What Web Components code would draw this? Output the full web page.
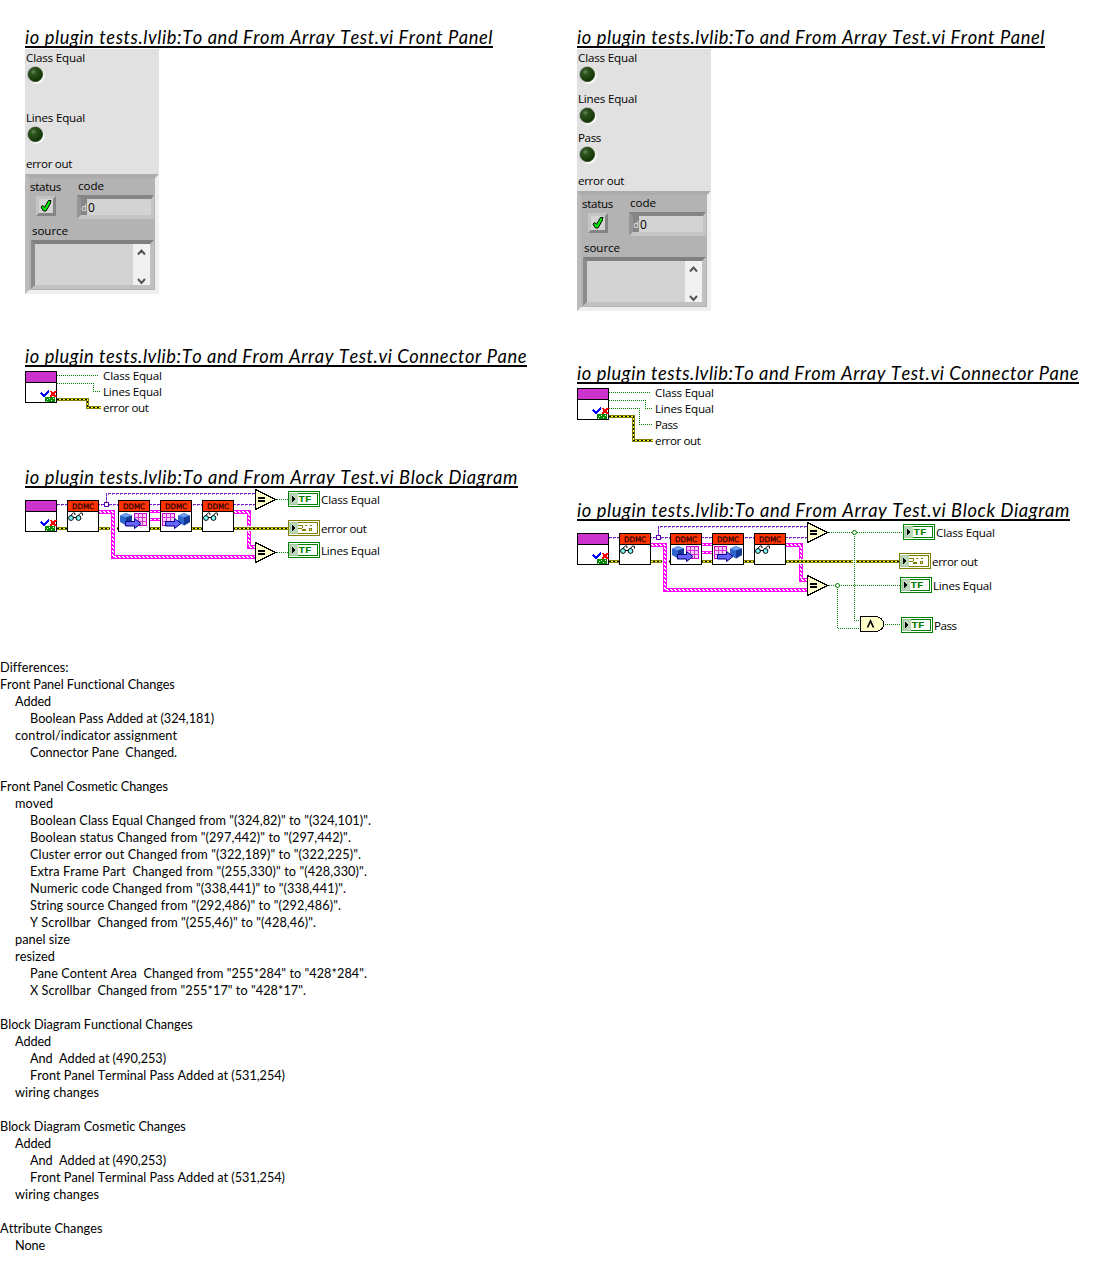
<!DOCTYPE html>
<html lang="en">
<head>
<meta charset="utf-8">
<title>VI difference report</title>
<style>
body{margin:0;background:#fff;color:#000;width:1104px;height:1288px;overflow:hidden}
</style>
</head>
<body>
<diff-report></diff-report>
<script>
// Text set to an exact advance width by adjusting its letter spacing.
class FitText extends HTMLElement{
  connectedCallback(){
    const r=this.attachShadow({mode:'open'});
    r.innerHTML='<style>:host{display:block;white-space:pre}span{display:inline-block;white-space:pre}</style><span><slot></slot></span>';
    const s=r.querySelector('span'),w=+this.getAttribute('w');
    const n=[...this.textContent].length;
    if(w&&n>1){
      s.style.fontKerning='none';
      const k=(w-s.getBoundingClientRect().width)/n;
      s.style.letterSpacing=k.toFixed(3)+'px';
    }
  }
}
customElements.define('fit-text',FitText);

class DocTitle extends HTMLElement{
  connectedCallback(){
    this.attachShadow({mode:'open'}).innerHTML=`<style>
    :host{display:block;width:${this.getAttribute('w')}px;height:18px;overflow:hidden;border-bottom:2px solid #000;
      font:italic 18.3px/24px Lato,"Open Sans",sans-serif;margin-bottom:1px}
    fit-text{margin-top:-3px}
    </style><fit-text w="${this.getAttribute('w')}">${this.getAttribute('text')}</fit-text>`;
  }
}
customElements.define('doc-title',DocTitle);

class RoundLed extends HTMLElement{
  connectedCallback(){
    const h=this.getAttribute('h');
    this.attachShadow({mode:'open'}).innerHTML=`<style>
    :host{display:block;height:${h}px;font:11.6px/17px "Open Sans","Noto Sans",sans-serif}
    fit-text{padding-left:1px;height:16px}
    svg{display:block;margin-left:1px}
    </style><fit-text w="${this.getAttribute('w')}">${this.getAttribute('label')}</fit-text>
    <svg width="20" height="20"><defs>
      <radialGradient id="g" cx=".36" cy=".32" r=".65"><stop offset="0" stop-color="#6c8a60"/><stop offset=".3" stop-color="#2c541e"/><stop offset="1" stop-color="#143506"/></radialGradient>
      <linearGradient id="b" x1="0" y1="0" x2="1" y2="1"><stop offset=".15" stop-color="#b0b0b0"/><stop offset=".52" stop-color="#dcdcdc"/><stop offset=".8" stop-color="#fff"/></linearGradient></defs>
      <circle cx="9.700" cy="9.900" r="9" fill="url(#b)"/>
      <circle cx="9.400" cy="9.400" r="7.800" fill="#b9c0b5"/>
      <circle cx="9.400" cy="9.400" r="7.100" fill="url(#g)" stroke="#244118" stroke-width=".8"/></svg>`;
  }
}
customElements.define('round-led',RoundLed);

class ErrorCluster extends HTMLElement{
  connectedCallback(){
    this.attachShadow({mode:'open'}).innerHTML=`<style>
    :host{display:flex;flex-direction:column;box-sizing:border-box;width:134px;height:120px;background:#b3b3b3;
      border:4px solid;border-color:#acacac #efefef #efefef #bbb;font:11.6px/16px "Open Sans","Noto Sans",sans-serif}
    .top{display:flex;height:46px}
    .st{width:48px}
    .st fit-text{padding:1px 0 0 1px;height:16px}
    .chk{box-sizing:border-box;width:20px;height:20px;margin:1px 0 0 7px;background:#d3d3d3;border:3px solid;border-color:#c4c4c4 #858585 #858585 #c4c4c4}
    .chk svg{display:block}
    .co fit-text{height:17px;padding-left:1px}
    .num{display:flex;box-sizing:border-box;width:77px;height:24px;border:4px solid;border-right-width:3px;border-color:#858585 #c5c5c5 #c5c5c5 #969696;background:#d3d3d3}
    .rad{width:6px;background:#858585;color:#e8e8e8;font-size:9px;line-height:17px;text-align:center}
    .num b{font-weight:400;font-size:12px;line-height:17px;padding-left:1px}
    .src{height:17px;padding-left:3px;margin-top:-1px}
    .str{display:flex;justify-content:flex-end;box-sizing:border-box;margin-left:2px;width:123px;height:49px;background:#d3d3d3;border:4px solid;border-right-width:4px;border-color:#808080 #c1c1c1 #c1c1c1 #8c8c8c}
    .bar{width:17px;height:41px;background:#f1f1f1}
    .bar svg{display:block}
    </style>
    <div class="top"><div class="st"><fit-text w="31">status</fit-text>
      <div class="chk"><svg width="14" height="14"><path d="M2 8L4 6.500L5.500 8.500L9.500 1.500H12L11 5L7 12H4.500Z" fill="#00f000" stroke="#000" stroke-width="1"/></svg></div></div>
    <div class="co"><fit-text w="26">code</fit-text><div class="num"><span class="rad">d</span><b>0</b></div></div></div>
    <fit-text class="src" w="36">source</fit-text>
    <div class="str"><div class="bar"><svg width="17" height="41" fill="none" stroke="#555" stroke-width="2"><path d="M5 10.500L8.500 6.500L12 10.500M5 35L8.500 39L12 35"/></svg></div></div>`;
  }
}
customElements.define('error-cluster',ErrorCluster);

class FrontPanel extends HTMLElement{
  connectedCallback(){
    const leds=JSON.parse(this.getAttribute('leds'));
    this.attachShadow({mode:'open'}).innerHTML=`<style>
    :host{display:flex;flex-direction:column;width:134px;background:#e1e1e1;font:11.6px/17px "Open Sans","Noto Sans",sans-serif}
    .eo{height:19px;margin-top:-1px;padding-left:1px}
    </style>${leds.map(l=>`<round-led label="${l[0]}" w="${l[1]}" h="${l[2]}"></round-led>`).join('')}
    <fit-text class="eo" w="46">error out</fit-text><error-cluster></error-cluster>`;
  }
}
customElements.define('front-panel',FrontPanel);

// Drawing helpers shared by the two kinds of diagram.
const line=(d,c,w,dash='')=>`<path d="${d}" fill="none" stroke="${c}" stroke-width="${w}"${dash?` stroke-dasharray="${dash}"`:''}/>`;
const green=d=>line(d,'#008000',1,'1 1');
const err=d=>line(d,'#808000',3)+line(d,'#ffff33',1)+line(d,'#000',1,'2 2');
const pink=d=>line(d,'#ff00ff',4)+`<g transform="translate(-.5 -.5)">${line(d,'#fff',1,'2 2')}</g><g transform="translate(.5 .5)">${line(d,'#fff',1,'2 2')}</g>`;
const violet=d=>line(d,'#7420c4',1,'3 1')+`<g transform="translate(0 1)">${line(d,'#a870dc',1,'1 3')}</g>`;
const label=(x,y,w,t)=>`<text x="${x}" y="${y}" textLength="${w}">${t}</text>`;
const frame=(x,y,c)=>`<rect x="${x+.5}" y="${y+.5}" width="31" height="31" fill="#fff" stroke="#000"/><rect x="${x+1}" y="${y+1}" width="30" height="10" fill="${c}"/><rect x="${x}" y="${y+11}" width="32" height="1"/>`;
const testIcon=(x,y)=>frame(x,y,'#cc33cc')+`<g transform="translate(${x} ${y})"><path d="M16 22L19 25L24 19.500" fill="none" stroke="#0000ff" stroke-width="2"/><path d="M25.500 20L31 26M31 20L25.500 26" stroke="#ff0000" stroke-width="2"/><rect x="20" y="26" width="10" height="5" fill="#008a00"/><path d="M22 28h1v1h-1zM24 27h1v1h-1zM26 29h1v1h-1zM28 27h1v1h-1zM21 30h1v1h-1z" fill="#fff"/></g>`;
const ddmc=(x,y)=>frame(x,y,'#ff3300')+`<text x="${x+5}" y="${y+8.5}" textLength="22" lengthAdjust="spacingAndGlyphs" style="font:7.500px 'DejaVu Sans',sans-serif" fill="#200000" stroke="#200000" stroke-width=".25">DDMC</text>`;
const glasses=(x,y)=>ddmc(x,y)+`<g transform="translate(${x} ${y})" fill="none" stroke="#000" shape-rendering="auto"><path d="M2 17L6.500 12.800Q8.500 12.500 8 15M9.500 17L14 12.800Q16.200 12.500 15.500 15.500M6 17.500h4" stroke-width="1"/><circle cx="4" cy="18" r="2.400" fill="#80ffff"/><circle cx="11.500" cy="18" r="2.400" fill="#80ffff"/></g>`;
const cube=(x,y)=>`<path d="M${x} ${y+2.5}L${x+6} ${y}L${x+12} ${y+2.5}V${y+9}L${x+6} ${y+12.5}L${x} ${y+9}Z" fill="#2d64cc"/><path d="M${x} ${y+2.5}L${x+6} ${y}L${x+12} ${y+2.5}L${x+6} ${y+4.5}Z" fill="#6c9cf0"/><path d="M${x+6} ${y+4.5}L${x+12} ${y+2.5}V${y+9}L${x+6} ${y+12.5}Z" fill="#123a96"/>`;
const grid=(x,y)=>`<rect x="${x+.5}" y="${y+.5}" width="12" height="12" fill="#ffccff" stroke="#cc00cc"/><path d="M${x+4.5} ${y}v13M${x+8.5} ${y}v13M${x} ${y+4.5}h13M${x} ${y+8.5}h13" stroke="#cc33cc"/>`;
const arrow=(x,y)=>`<path d="M${x} ${y+3}H${x+9}V${y}L${x+15.5} ${y+5}L${x+9} ${y+10}V${y+7.5}H${x}Z" fill="#6666ff" stroke="#000080"/>`;
const toArr=(x,y)=>ddmc(x,y)+`<g shape-rendering="auto">${cube(x+2,y+13)}${grid(x+16,y+13)}${arrow(x+7.5,y+18.5)}</g>`;
const fromArr=(x,y)=>ddmc(x,y)+`<g shape-rendering="auto">${grid(x+2,y+13)}${cube(x+18,y+13)}${arrow(x+5.5,y+18.5)}</g>`;
const equal=(x,y)=>`<path d="M${x+.5} ${y-9.5}L${x+20.5} ${y+.5}L${x+.5} ${y+10.5}Z" fill="#ffffcc" stroke="#000"/><path d="M${x+3} ${y-1}h7M${x+3} ${y+2}h7" stroke="#000" stroke-width="2"/>`;
const box=(x,y,c,inner)=>`<rect x="${x+.5}" y="${y+.5}" width="31" height="15" fill="#fff" stroke="${c}"/><rect x="${x+2.5}" y="${y+2.5}" width="27" height="11" fill="#fff" stroke="${c}" stroke-width="1"/><rect x="${x+1}" y="${y+2}" width="9" height="12" fill="#b4d2b0" opacity=".9"/><path d="M${x+4} ${y+4.5}L${x+7.5} ${y+8}L${x+4} ${y+11.5}Z" fill="#000"/>${inner}`;
const tf=(x,y)=>box(x,y,'#008000',`<text x="${x+10.5}" y="${y+11}" textLength="13" lengthAdjust="spacingAndGlyphs" style="font:bold 8.500px 'Liberation Mono',monospace" fill="#008000">TF</text>`);
const clu=(x,y)=>box(x,y,'#808000',`<path d="M${x+10} ${y+5.5}h5M${x+10} ${y+8.500}h4M${x+14.5} ${y+5}v3M${x+17} ${y+5.5}h2M${x+22} ${y+5.5}h2" stroke="#808000"/><path d="M${x+14} ${y+10}h4" stroke="#808000" stroke-width="2"/><rect x="${x+21.5}" y="${y+8.5}" width="2" height="2" fill="none" stroke="#808000"/>`);
const dot=(x,y)=>`<circle cx="${x}" cy="${y}" r="2" fill="#fff" stroke="#008000" shape-rendering="auto"/>`;
const svgDoc=(w,h,s)=>`<style>:host{display:block}svg{display:block;font:11.6px "Open Sans","Noto Sans",sans-serif}</style><svg width="${w}" height="${h}" shape-rendering="crispEdges">${s}</svg>`;

class ConnectorPane extends HTMLElement{
  connectedCallback(){
    const pass=this.hasAttribute('pass');
    let s=green('M32 7.500H73');
    s+=green('M32 15.500H68.500V23.500H75');
    if(pass) s+=green('M32 23.500H62.500V39.500H75')+err('M32 31.500H56.500V55.500H76')+label(78,44,23,'Pass')+label(78,60,46,'error out');
    else s+=err('M32 31.500H62.500V39.500H76')+label(78,44,46,'error out');
    s+=testIcon(0,3)+label(78,12,59,'Class Equal')+label(78,28,59,'Lines Equal');
    this.attachShadow({mode:'open'}).innerHTML=svgDoc(200,64,s);
  }
}
customElements.define('connector-pane',ConnectorPane);

class BlockDiagram extends HTMLElement{
  connectedCallback(){
    const pass=this.hasAttribute('pass'), t=12;
    let s=violet('M32 16.500H230')+violet('M81.500 16V5.500H230');
    s+='<rect x="79.500" y="14.500" width="4" height="4" fill="#fff" stroke="#5a00b0"/>';
    s+=err('M32 40.500H85')+err('M92 40.500H'+(pass?322:263));
    s+=pink('M74 24H88V69H230')+pink('M209 24H224V38')+pink('M224 43V59H230');
    s+=line('M125 23.500H135M125 31.500H135','#ff00ff',3)+line('M125 23.500H135M125 31.500H135','#fff',1,'2 2');
    s+=testIcon(0,t)+glasses(42,t)+toArr(93,t)+fromArr(135,t)+glasses(177,t);
    if(pass){
      s+='<rect x="276" y="38" width="3" height="5" fill="#fff"/>';
      s+=green('M250 11.500H326')+green('M250 64.500H323')+green('M277.500 11V99.500H283')+green('M260.500 64V107.500H283')+green('M306 103.500H324');
      s+=dot(277.5,11.5)+dot(260.5,64.5);
      s+='<path d="M283.500 95.500H299Q306.500 97 306.500 103Q306.500 109.500 299 110.500H283.500Z" fill="#ffffcc" stroke="#000"/><path d="M290.500 106.500L293.500 100L296.500 106.500" fill="none" stroke="#000" stroke-width="1.700" shape-rendering="auto"/>';
      s+=tf(326,3)+clu(322,32)+tf(323,56)+tf(324,96);
      s+=label(359,16,59,'Class Equal')+label(355,45,46,'error out')+label(356,69,59,'Lines Equal')+label(357,109,23,'Pass');
    }else{
      s+=green('M250 11.500H263')+green('M250 64.500H263')+tf(263,3)+clu(263,32)+tf(263,54);
      s+=label(296,16,59,'Class Equal')+label(296,45,46,'error out')+label(296,67,59,'Lines Equal');
    }
    s+=equal(230,11)+equal(230,64);
    this.attachShadow({mode:'open'}).innerHTML=svgDoc(500,115,s);
  }
}
customElements.define('block-diagram',BlockDiagram);

class ChangeList extends HTMLElement{
  connectedCallback(){
    const rows=[[0,68,'Differences:'],[0,175,'Front Panel Functional Changes'],[1,36,'Added'],[2,184,'Boolean Pass Added at (324,181)'],[1,162,'control/indicator assignment'],[2,147,'Connector Pane  Changed.'],0,
    [0,168,'Front Panel Cosmetic Changes'],[1,38,'moved'],[2,341,'Boolean Class Equal Changed from "(324,82)" to "(324,101)".'],[2,321,'Boolean status Changed from "(297,442)" to "(297,442)".'],[2,331,'Cluster error out Changed from "(322,189)" to "(322,225)".'],[2,337,'Extra Frame Part  Changed from "(255,330)" to "(428,330)".'],[2,316,'Numeric code Changed from "(338,441)" to "(338,441)".'],[2,311,'String source Changed from "(292,486)" to "(292,486)".'],[2,286,'Y Scrollbar  Changed from "(255,46)" to "(428,46)".'],[1,55,'panel size'],[1,40,'resized'],[2,337,'Pane Content Area  Changed from "255*284" to "428*284".'],[2,276,'X Scrollbar  Changed from "255*17" to "428*17".'],0,
    [0,193,'Block Diagram Functional Changes'],[1,36,'Added'],[2,136,'And  Added at (490,253)'],[2,255,'Front Panel Terminal Pass Added at (531,254)'],[1,84,'wiring changes'],0,
    [0,186,'Block Diagram Cosmetic Changes'],[1,36,'Added'],[2,136,'And  Added at (490,253)'],[2,255,'Front Panel Terminal Pass Added at (531,254)'],[1,84,'wiring changes'],0,
    [0,102,'Attribute Changes'],[1,30,'None']];
    this.attachShadow({mode:'open'}).innerHTML=`<style>
    :host{display:block;font:12.7px/17px Lato,"Open Sans",sans-serif}
    fit-text,.gap{height:17px}.l1{padding-left:15px}.l2{padding-left:30px}
    </style>`+rows.map(r=>r?`<fit-text class="l${r[0]}" w="${r[1]}">${r[2]}</fit-text>`:'<div class="gap"></div>').join('');
  }
}
customElements.define('change-list',ChangeList);

class DiffReport extends HTMLElement{
  connectedCallback(){
    const T='io plugin tests.lvlib:To and From Array Test.vi ';
    const col=(leds,p,h1,h2)=>`<section>
      <doc-title w="468" text="${T}Front Panel"></doc-title>
      <front-panel style="height:${p?262:245}px" leds='${JSON.stringify(leds)}'></front-panel>
      <doc-title style="margin-top:${h1}px" w="502" text="${T}Connector Pane"></doc-title>
      <connector-pane ${p}></connector-pane>
      <doc-title style="margin-top:${h2}px" w="493" text="${T}Block Diagram"></doc-title>
      <block-diagram style="margin-top:-1px" ${p}></block-diagram></section>`;
    this.attachShadow({mode:'open'}).innerHTML=`<style>
    :host{display:block}
    main{display:flex;box-sizing:border-box;height:659px;padding:28px 0 0 25px}
    section{flex:0 0 552px}
    section+section{flex-basis:527px}
    </style><main>${col([['Class Equal',59,60],['Lines Equal',59,47]],'',53,36)}
    ${col([['Class Equal',59,41],['Lines Equal',59,39],['Pass',23,44]],'pass',53,52)}</main>
    <change-list></change-list>`;
  }
}
customElements.define('diff-report',DiffReport);
</script>
</body>
</html>
